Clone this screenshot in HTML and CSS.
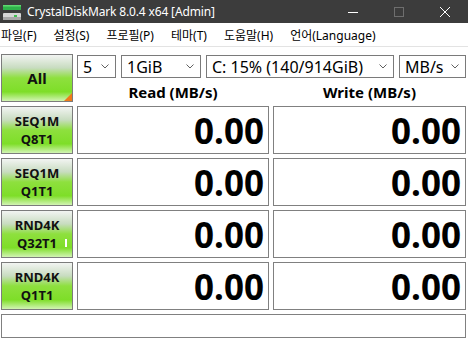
FILE: index.html
```html
<!doctype html>
<html lang='ko'>
  <head>
    <title>CrystalDiskMark 8.0.4 x64 [Admin]</title>
    <meta charset='UTF-8'>
    <meta name='viewport' content='width=device-width, initial-scale=1'>
    <link rel="stylesheet" href="styles.css">
  </head>
  <body>
<header class=titlebar>
  <svg class=app-icon width=20 height=18 viewBox='0 0 20 18'>
    <rect x=1 y=2 width=18 height=5 fill='#2fb24a'/>
    <rect x=1 y=2 width=18 height=1.5 fill='#5fd870'/>
    <rect x=1 y=10 width=18 height=7 rx=1 fill='#d6d6d6'/>
    <rect x=1 y=14 width=18 height=3 fill='#a8a8a8'/>
    <rect x=12 y=12 width=3 height=2 fill='#3fc050'/>
  </svg>
  <span class=title>CrystalDiskMark 8.0.4 x64 [Admin]</span>
  <span class=controls>
    <svg width=46 height=22 viewBox='0 0 46 22'><line x1=18 y1=11.5 x2=28 y2=11.5 stroke='#fff' stroke-width=1 /></svg>
    <svg width=46 height=22 viewBox='0 0 46 22'><rect x=18.5 y=6.5 width=9 height=9 fill=none stroke='#6e6e6e'/></svg>
    <svg width=46 height=22 viewBox='0 0 46 22'><path d='M18 6 L28 16 M28 6 L18 16' stroke='#fff' stroke-width=1 /></svg>
  </span>
</header>
<nav class=menubar>
  <span>파일(F)</span>
  <span>설정(S)</span>
  <span>프로필(P)</span>
  <span>테마(T)</span>
  <span>도움말(H)</span>
  <span>언어(Language)</span>
</nav>
<main class=bench>
  <button class='test all'>All</button>
  <div class=settings>
    <div class=selects>
      <div class='select count'>5<svg class=chev width=8 height=5 viewBox='0 0 8 5'><path d='M0.5 0.5 L4 4 L7.5 0.5' fill=none stroke='#606060'/></svg></div>
      <div class='select size'>1GiB<svg class=chev width=8 height=5 viewBox='0 0 8 5'><path d='M0.5 0.5 L4 4 L7.5 0.5' fill=none stroke='#606060'/></svg></div>
      <div class='select drive'>C: 15% (140/914GiB)<svg class=chev width=8 height=5 viewBox='0 0 8 5'><path d='M0.5 0.5 L4 4 L7.5 0.5' fill=none stroke='#606060'/></svg></div>
      <div class='select unit'>MB/s<svg class=chev width=8 height=5 viewBox='0 0 8 5'><path d='M0.5 0.5 L4 4 L7.5 0.5' fill=none stroke='#606060'/></svg></div>
    </div>
    <div class=heads>
      <span>Read (MB/s)</span>
      <span>Write (MB/s)</span>
    </div>
  </div>

  <button class=test>SEQ1M<br>Q8T1</button>
  <output class=value>0.00</output>
  <output class=value>0.00</output>

  <button class=test>SEQ1M<br>Q1T1</button>
  <output class=value>0.00</output>
  <output class=value>0.00</output>

  <button class='test busy'>RND4K<br>Q32T1</button>
  <output class=value>0.00</output>
  <output class=value>0.00</output>

  <button class=test>RND4K<br>Q1T1</button>
  <output class=value>0.00</output>
  <output class=value>0.00</output>

  <div class=comment></div>
</main>
  </body>
</html>
```

FILE: styles.css
```css
html, body {
  margin: 0;
  background: #fff;
  font-family: "Noto Sans", "Noto Sans CJK KR", sans-serif;
}
.titlebar {
  height: 23px;
  background: #3c3c3c;
  color: #fff;
  display: flex;
  align-items: center;
}
.app-icon {
  margin: 0 5px 0 2px;
}
.title {
  font-size: 12px;
  letter-spacing: -0.15px;
  flex: 1;
}
.controls {
  display: flex;
}
.menubar {
  height: 23px;
  border-bottom: 1px solid #e3e3e3;
  display: flex;
  align-items: center;
  gap: 17px;
  padding-left: 1px;
  font-size: 12px;
  color: #000;
}
.bench {
  display: grid;
  grid-template-columns: 72px 192px 193px;
  grid-template-rows: 48px repeat(4, 48px) 24px;
  gap: 4px;
  padding: 7px 0 0 1px;
}
.test {
  position: relative;
  margin: 0;
  padding: 0;
  border: 1px solid #7c7c7c;
  background: linear-gradient(to bottom, #f2f4f2 0%, #c8dcc0 28%, #8ee03e 50%, #7ede28 80%, #d2f4b4 100%);
  font: bold 13px/18px "Noto Sans", sans-serif;
  color: #111;
}
.all {
  font-size: 15px;
}
.all::after {
  content: '';
  position: absolute;
  right: 0;
  bottom: 0;
  border-style: solid;
  border-width: 0 0 8px 8px;
  border-color: transparent transparent #f07a1a transparent;
}
.busy::after {
  content: '';
  position: absolute;
  left: 63px;
  top: 28px;
  width: 2px;
  height: 8px;
  background: #fff;
}
.settings {
  grid-column: 2 / 4;
  display: flex;
  flex-direction: column;
}
.selects {
  display: flex;
  gap: 5px;
  margin-top: 1px;
  height: 23px;
}
.select {
  box-sizing: border-box;
  border: 1px solid #7a7a7a;
  display: flex;
  align-items: center;
  justify-content: space-between;
  padding: 0 6px 0 5px;
  font-size: 16px;
  color: #000;
}
.count { width: 39px; }
.size { width: 80px; }
.drive { width: 188px; }
.unit { width: 67px; }
.heads {
  flex: 1;
  display: grid;
  grid-template-columns: 192px 193px;
  gap: 4px;
  align-items: end;
  font-weight: bold;
  font-size: 15px;
  line-height: 20px;
  text-align: center;
}
.value {
  border: 1px solid #808080;
  display: flex;
  align-items: center;
  justify-content: flex-end;
  padding-right: 4px;
  font-weight: bold;
  font-size: 35px;
  color: #000;
}
.comment {
  grid-column: 1 / 4;
  border: 1px solid #808080;
}
```
